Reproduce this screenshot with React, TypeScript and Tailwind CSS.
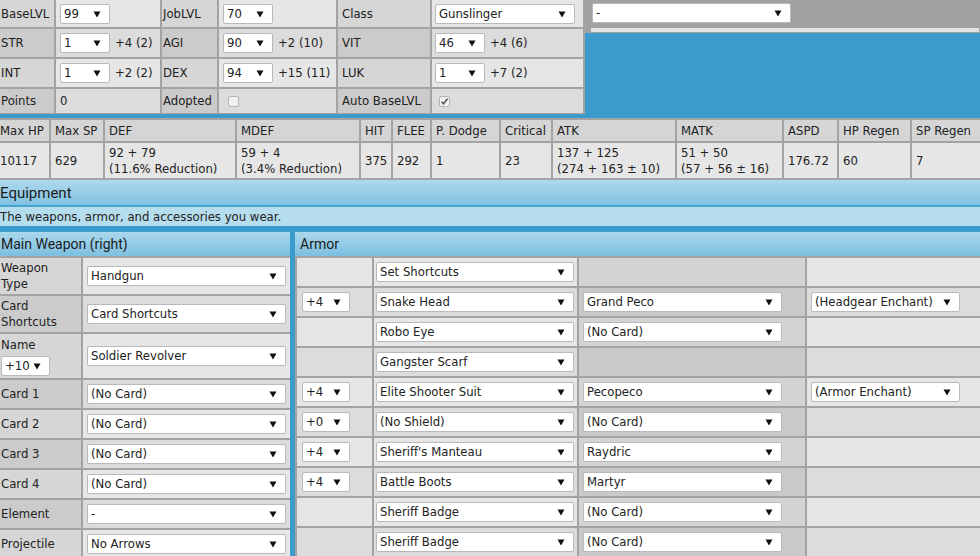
import React from 'react';

const Arrow = () => (
  <svg width="8" height="8" viewBox="0 0 8 8" className="absolute right-[8px] top-1/2 -translate-y-1/2">
    <path d="M0.5 1.5h7L4 7.5z" fill="#111" />
  </svg>
);

interface SelProps {
  value: string;
  className?: string;
}

const Sel: React.FC<SelProps> = ({ value, className = '' }) => (
  <div
    className={`relative flex items-center h-[20px] shrink-0 bg-white border border-[#b9b9b9] rounded-[2px] pl-[3px] pr-5 whitespace-nowrap overflow-hidden ${className}`}
  >
    {value}
    <Arrow />
  </div>
);

const Check = ({ checked }: { checked?: boolean }) => (
  <span className="flex items-center justify-center w-[11px] h-[11px] rounded-[2px] border border-[#b3b3b3] bg-[#f1f1f1]">
    {checked && (
      <svg width="9" height="9" viewBox="0 0 9 9">
        <path d="M1.5 4.8l2 2 4-5" stroke="#5a5a5a" strokeWidth="1.6" fill="none" />
      </svg>
    )}
  </span>
);

const label = (i: number) => (i % 2 === 0 ? 'bg-[#d6d6d6]' : 'bg-[#cbcbcb]');
const value = (i: number) => (i % 2 === 0 ? 'bg-[#e6e6e6]' : 'bg-[#dcdcdc]');

const statHeads = ['Max HP', 'Max SP', 'DEF', 'MDEF', 'HIT', 'FLEE', 'P. Dodge', 'Critical', 'ATK', 'MATK', 'ASPD', 'HP Regen', 'SP Regen'];
const statValues: string[][] = [
  ['10117'],
  ['629'],
  ['92 + 79', '(11.6% Reduction)'],
  ['59 + 4', '(3.4% Reduction)'],
  ['375'],
  ['292'],
  ['1'],
  ['23'],
  ['137 + 125', '(274 + 163 ± 10)'],
  ['51 + 50', '(57 + 56 ± 16)'],
  ['176.72'],
  ['60'],
  ['7'],
];

const weaponRows = [
  { label: ['Weapon', 'Type'], value: 'Handgun', h: 'h-[36px]' },
  { label: ['Card', 'Shortcuts'], value: 'Card Shortcuts', h: 'h-[36px]' },
  { label: ['Name'], value: 'Soldier Revolver', h: 'h-[44px]', refine: '+10' },
  { label: ['Card 1'], value: '(No Card)', h: 'h-[28px]' },
  { label: ['Card 2'], value: '(No Card)', h: 'h-[28px]' },
  { label: ['Card 3'], value: '(No Card)', h: 'h-[28px]' },
  { label: ['Card 4'], value: '(No Card)', h: 'h-[28px]' },
  { label: ['Element'], value: '-', h: 'h-[28px]' },
  { label: ['Projectile'], value: 'No Arrows', h: 'h-[28px]' },
];

const armorRows: (string | null)[][] = [
  [null, 'Set Shortcuts', null, null],
  ['+4', 'Snake Head', 'Grand Peco', '(Headgear Enchant)'],
  [null, 'Robo Eye', '(No Card)', null],
  [null, 'Gangster Scarf', null, null],
  ['+4', 'Elite Shooter Suit', 'Pecopeco', '(Armor Enchant)'],
  ['+0', '(No Shield)', '(No Card)', null],
  ['+4', "Sheriff's Manteau", 'Raydric', null],
  ['+4', 'Battle Boots', 'Martyr', null],
  [null, 'Sheriff Badge', '(No Card)', null],
  [null, 'Sheriff Badge', '(No Card)', null],
];

export default function App() {
  return (
    <div className="w-[980px] h-[556px] overflow-hidden bg-[#3a9bcc] text-[#222] text-[11.7px] leading-[16px] font-['DejaVu_Sans',Verdana,sans-serif]">
      {/* Character stats */}
      <div className="flex pb-[4px]">
        <div className="pr-[2px] pb-[1px] bg-[#a3a3a3]">
          <div className="grid grid-cols-[54px_104px_55px_117px_92px_151px] grid-rows-[27px_28px_28px_24px] gap-[2px]">
            <div className={`${label(0)} flex items-center pl-[1px]`}>BaseLVL</div>
            <div className={`${value(0)} flex items-center pl-[4px]`}><Sel value="99" className="w-[50px]" /></div>
            <div className={`${label(0)} flex items-center pl-[1px]`}>JobLVL</div>
            <div className={`${value(0)} flex items-center pl-[4px]`}><Sel value="70" className="w-[50px]" /></div>
            <div className={`${label(0)} flex items-center pl-[4px]`}>Class</div>
            <div className={`${value(0)} flex items-center pl-[3px]`}><Sel value="Gunslinger" className="w-[140px]" /></div>

            <div className={`${label(1)} flex items-center pl-[1px]`}>STR</div>
            <div className={`${value(1)} flex items-center gap-[5px] pl-[4px]`}><Sel value="1" className="w-[50px]" />+4 (2)</div>
            <div className={`${label(1)} flex items-center pl-[1px]`}>AGI</div>
            <div className={`${value(1)} flex items-center gap-[5px] pl-[4px]`}><Sel value="90" className="w-[50px]" />+2 (10)</div>
            <div className={`${label(1)} flex items-center pl-[4px]`}>VIT</div>
            <div className={`${value(1)} flex items-center gap-[5px] pl-[3px]`}><Sel value="46" className="w-[50px]" />+4 (6)</div>

            <div className={`${label(0)} flex items-center pl-[1px]`}>INT</div>
            <div className={`${value(0)} flex items-center gap-[5px] pl-[4px]`}><Sel value="1" className="w-[50px]" />+2 (2)</div>
            <div className={`${label(0)} flex items-center pl-[1px]`}>DEX</div>
            <div className={`${value(0)} flex items-center gap-[5px] pl-[4px]`}><Sel value="94" className="w-[50px]" />+15 (11)</div>
            <div className={`${label(0)} flex items-center pl-[4px]`}>LUK</div>
            <div className={`${value(0)} flex items-center gap-[5px] pl-[3px]`}><Sel value="1" className="w-[50px]" />+7 (2)</div>

            <div className={`${label(1)} flex items-center pl-[1px]`}>Points</div>
            <div className={`${value(1)} flex items-center pl-[4px]`}>0</div>
            <div className={`${label(1)} flex items-center pl-[1px]`}>Adopted</div>
            <div className={`${value(1)} flex items-center pl-[9px]`}><Check /></div>
            <div className={`${label(1)} flex items-center pl-[4px]`}>Auto BaseLVL</div>
            <div className={`${value(1)} flex items-center pl-[7px]`}><Check checked /></div>
          </div>
        </div>
        <div className="flex-1">
          <div className="bg-[#a2a2a2] pl-[7px] pt-[3px] pb-[1px]">
            <Sel value="-" className="w-[199px] border-[#8c8c8c]" />
            <div className="h-[4px] mt-[5px] -ml-[1px] mr-[1px] bg-[#e2e2e2]" />
          </div>
        </div>
      </div>

      {/* Derived stats */}
      <div className="grid grid-cols-[49px_52px_130px_122px_30px_37px_67px_50px_122px_105px_53px_71px_68px] grid-rows-[21px_35px] gap-[2px] py-[2px] bg-[#a3a3a3]">
        {statHeads.map((h, i) => (
          <div key={h} className={`bg-[#d5d5d5] flex items-center whitespace-nowrap ${i === 0 ? 'pl-0' : 'pl-[4px]'}`}>
            {h}
          </div>
        ))}
        {statValues.map((v, i) => (
          <div key={i} className={`bg-[#e6e6e6] flex flex-col justify-center whitespace-nowrap ${i === 0 ? 'pl-0' : 'pl-[4px]'}`}>
            {v.map((line) => (
              <span key={line}>{line}</span>
            ))}
          </div>
        ))}
      </div>

      {/* Equipment */}
      <div className="h-[25px] flex items-center bg-gradient-to-b from-[#aed9ed] to-[#80c2e2] text-[15px] text-[#1c1c1c] font-['Roboto',sans-serif]">
        Equipment
      </div>
      <div className="h-[2px] bg-[#4aa4d2]" />
      <div className="h-[19px] flex items-center bg-[#b6ddee]">The weapons, armor, and accessories you wear.</div>

      <div className="flex gap-[5px] mt-[6px]">
        {/* Main weapon */}
        <div className="w-[290px] shrink-0">
          <div className="h-[24px] flex items-center pl-[1px] bg-gradient-to-b from-[#abd8ed] to-[#7cbfe0] text-[14px] text-[#1c1c1c] font-['Roboto',sans-serif]">
            Main Weapon (right)
          </div>
          <div className="grid grid-cols-[81px_207px] gap-[2px] pt-[2px] bg-[#a3a3a3]">
            {weaponRows.map((r, i) => (
              <React.Fragment key={i}>
                <div className={`${label(i)} ${r.h} flex flex-col justify-center pl-[1px]`}>
                  {r.label.map((l) => (
                    <span key={l}>{l}</span>
                  ))}
                  {r.refine && <Sel value={r.refine} className="w-[49px] h-[19px] mt-[3px]" />}
                </div>
                <div className={`${value(i)} ${r.h} flex items-center pl-[4px]`}>
                  <Sel value={r.value} className="w-[199px]" />
                </div>
              </React.Fragment>
            ))}
          </div>
        </div>

        {/* Armor */}
        <div className="flex-1">
          <div className="h-[24px] flex items-center pl-[5px] bg-gradient-to-b from-[#abd8ed] to-[#7cbfe0] text-[14px] text-[#1c1c1c] font-['Roboto',sans-serif]">
            Armor
          </div>
          <div className="grid grid-cols-[75px_203px_226px_173px] auto-rows-[28px] gap-[2px] pt-[2px] pl-[2px] bg-[#a3a3a3]">
            {armorRows.map((r, i) => (
              <React.Fragment key={i}>
                <div className={`${value(i)} flex items-center pl-[5px]`}>
                  {r[0] && <Sel value={r[0]} className="w-[48px]" />}
                </div>
                <div className={`${value(i)} flex items-center pl-[2px]`}>
                  {r[1] && <Sel value={r[1]} className="w-[198px]" />}
                </div>
                <div className={`${i % 2 === 0 ? 'bg-[#d4d4d4]' : 'bg-[#c9c9c9]'} flex items-center pl-[4px]`}>
                  {r[2] && <Sel value={r[2]} className="w-[199px]" />}
                </div>
                <div className={`${value(i)} flex items-center pl-[4px]`}>
                  {r[3] && <Sel value={r[3]} className="w-[149px]" />}
                </div>
              </React.Fragment>
            ))}
          </div>
        </div>
      </div>
    </div>
  );
}
